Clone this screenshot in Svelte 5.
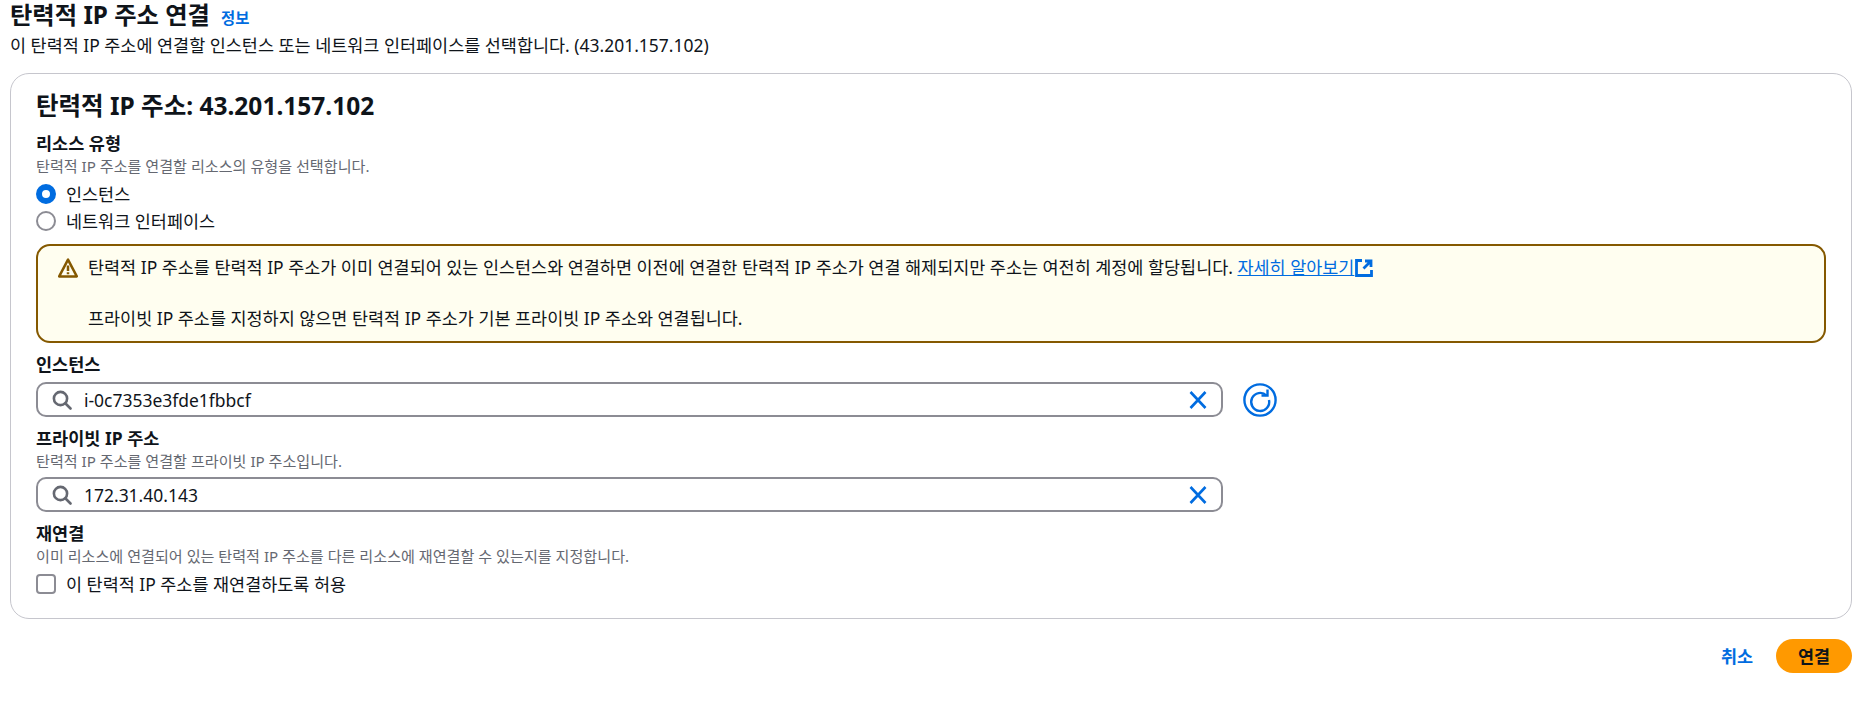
<script lang="ts">
  let instance = $state('i-0c7353e3fde1fbbcf');
  let privateIp = $state('172.31.40.143');
  let resourceType = $state('instance');
  let allowReassoc = $state(false);
</script>

{#snippet searchIcon()}
  <svg class="search-icon" viewBox="0 0 20 20" aria-hidden="true">
    <circle cx="8.5" cy="8.5" r="6.6" />
    <path d="M13.5 13.5l5 5" />
  </svg>
{/snippet}

{#snippet clearIcon()}
  <svg class="clear-icon" viewBox="0 0 20 20" aria-hidden="true">
    <path d="M2.5 2l15 16M17.5 2l-15 16" />
  </svg>
{/snippet}

<div class="page">
  <header class="page-head">
    <h1>탄력적 IP 주소 연결<a class="info" href="#info">정보</a></h1>
    <p>이 탄력적 IP 주소에 연결할 인스턴스 또는 네트워크 인터페이스를 선택합니다. (43.201.157.102)</p>
  </header>

  <section class="card">
    <h2>탄력적 IP 주소: 43.201.157.102</h2>

    <div class="label">리소스 유형</div>
    <div class="desc">탄력적 IP 주소를 연결할 리소스의 유형을 선택합니다.</div>
    <div class="radios">
      <button class="radio" class:checked={resourceType === 'instance'} onclick={() => (resourceType = 'instance')}>
        <span class="dot"></span>인스턴스
      </button>
      <button class="radio" class:checked={resourceType === 'eni'} onclick={() => (resourceType = 'eni')}>
        <span class="dot"></span>네트워크 인터페이스
      </button>
    </div>

    <div class="alert">
      <svg class="warn-icon" viewBox="0 0 20 20" aria-hidden="true">
        <path d="M10 1.6L1.2 18.4h17.6z" />
        <path d="M10 7.5v5.4M10 14.2v2" />
      </svg>
      <div class="alert-text">
        탄력적 IP 주소를 탄력적 IP 주소가 이미 연결되어 있는 인스턴스와 연결하면 이전에 연결한 탄력적 IP 주소가 연결 해제되지만 주소는 여전히 계정에 할당됩니다.
        <a href="#learn">자세히 알아보기<svg class="ext" viewBox="0 0 18 18" aria-hidden="true"><path d="M7 1.5H1.5v15h15V11" /><path d="M10 2h6v6M16 2L8.5 9.5" /></svg></a>
        <br /><br />
        프라이빗 IP 주소를 지정하지 않으면 탄력적 IP 주소가 기본 프라이빗 IP 주소와 연결됩니다.
      </div>
    </div>

    <div class="label instance-label">인스턴스</div>
    <div class="input-row">
      <div class="input">
        {@render searchIcon()}
        <input bind:value={instance} />
        {@render clearIcon()}
      </div>
      <button class="refresh" aria-label="새로 고침">
        <svg viewBox="0 0 34 34">
          <circle cx="17" cy="17" r="15.6" />
          <path d="M23.5 12.5A9 9 0 1 0 26 17" />
          <path d="M18.5 12.5h6v-6" />
        </svg>
      </button>
    </div>

    <div class="label ip-label">프라이빗 IP 주소</div>
    <div class="desc">탄력적 IP 주소를 연결할 프라이빗 IP 주소입니다.</div>
    <div class="input-row ip-input">
      <div class="input">
        {@render searchIcon()}
        <input bind:value={privateIp} />
        {@render clearIcon()}
      </div>
    </div>

    <div class="label re-label">재연결</div>
    <div class="desc">이미 리소스에 연결되어 있는 탄력적 IP 주소를 다른 리소스에 재연결할 수 있는지를 지정합니다.</div>
    <label class="check">
      <input type="checkbox" bind:checked={allowReassoc} />
      <span>이 탄력적 IP 주소를 재연결하도록 허용</span>
    </label>
  </section>

  <footer class="actions">
    <a class="cancel" href="#cancel">취소</a>
    <button class="primary">연결</button>
  </footer>
</div>

<style>
  :global(body) {
    background: #fff;
  }

  .page {
    font-family: 'Noto Sans', 'Noto Sans CJK KR', sans-serif;
    font-size: 17.47px;
    line-height: 24px;
    color: #0f141a;
    padding: 0 19px 0 10px;
  }

  h1 {
    margin: 0;
    height: 30px;
    font-size: 24.3px;
    line-height: 30px;
    font-weight: 700;
  }

  .info {
    margin-left: 11px;
    font-size: 15.4px;
    font-weight: 700;
    color: #006ce0;
    text-decoration: none;
  }

  .page-head p {
    margin: 3px 0 0;
    height: 24px;
  }

  .card {
    margin-top: 16px;
    height: 546px;
    box-sizing: border-box;
    border: 1px solid #c6c6cd;
    border-radius: 19px;
    padding: 16px 25px 0;
  }

  h2 {
    margin: 0;
    font-size: 24.5px;
    line-height: 32px;
    font-weight: 700;
  }

  .label {
    margin-top: 9px;
    height: 24px;
    font-size: 17.5px;
    font-weight: 700;
    line-height: 24px;
  }

  .desc {
    height: 22px;
    font-size: 15.1px;
    line-height: 22px;
    color: #656871;
  }

  .radios {
    margin-top: 5px;
    display: flex;
    flex-direction: column;
    gap: 3px;
  }

  .radio {
    display: flex;
    align-items: center;
    gap: 10px;
    height: 24px;
    padding: 0;
    border: 0;
    background: none;
    font: inherit;
    color: inherit;
    cursor: pointer;
  }

  .dot {
    width: 20px;
    height: 20px;
    box-sizing: border-box;
    border: 2.4px solid #8c8c94;
    border-radius: 50%;
    background: #fff;
  }

  .radio.checked .dot {
    border: 6px solid #006ce0;
  }

  .alert {
    margin-top: 11px;
    display: flex;
    gap: 10px;
    box-sizing: border-box;
    height: 99px;
    padding: 9px 20px 0 20px;
    background: #fffef0;
    border: 2px solid #855900;
    border-radius: 14px;
    line-height: 25.5px;
  }

  .warn-icon {
    flex: none;
    width: 20px;
    height: 20px;
    margin-top: 3px;
    fill: none;
    stroke: #855900;
    stroke-width: 2.5;
    stroke-linejoin: round;
  }

  .alert-text a {
    color: #006ce0;
    text-decoration: underline;
  }

  .ext {
    width: 18px;
    height: 18px;
    margin-left: 1px;
    vertical-align: -3px;
    fill: none;
    stroke: #006ce0;
    stroke-width: 2.8;
  }

  .instance-label {
    margin-top: 9px;
  }

  .input-row {
    display: flex;
    align-items: center;
    gap: 20px;
    margin-top: 6px;
  }

  .input {
    flex: none;
    width: 1187px;
    height: 35px;
    box-sizing: border-box;
    display: flex;
    align-items: center;
    padding: 0 13px 0 14px;
    border: 2.4px solid #8c8c94;
    border-radius: 10px;
    background: #fff;
  }

  .input input {
    flex: 1;
    min-width: 0;
    margin-left: 12px;
    padding: 0;
    border: 0;
    outline: 0;
    background: none;
    font: inherit;
    color: inherit;
  }

  .search-icon {
    flex: none;
    width: 20px;
    height: 20px;
    fill: none;
    stroke: #656871;
    stroke-width: 2.6;
    stroke-linecap: round;
  }

  .clear-icon {
    flex: none;
    width: 20px;
    height: 20px;
    fill: none;
    stroke: #006ce0;
    stroke-width: 2.6;
  }

  .refresh {
    width: 34px;
    height: 34px;
    padding: 0;
    border: 0;
    background: none;
    cursor: pointer;
  }

  .refresh svg {
    display: block;
    width: 34px;
    height: 34px;
    fill: none;
    stroke: #006ce0;
    stroke-width: 2.4;
  }

  .ip-label {
    margin-top: 9px;
  }

  .ip-input {
    margin-top: 5px;
  }

  .re-label {
    margin-top: 9px;
  }

  .check {
    margin-top: 5px;
    display: flex;
    align-items: center;
    gap: 10px;
    height: 24px;
  }

  .check input {
    appearance: none;
    flex: none;
    width: 20px;
    height: 20px;
    margin: 0;
    border: 2.4px solid #8c8c94;
    border-radius: 4px;
    background: #fff;
  }

  .actions {
    margin-top: 20px;
    display: flex;
    justify-content: flex-end;
    align-items: center;
    gap: 23px;
  }

  .cancel {
    color: #006ce0;
    font-weight: 700;
    text-decoration: none;
  }

  .primary {
    width: 76px;
    height: 34px;
    padding: 0;
    border: 0;
    border-radius: 20px;
    background: #ff9900;
    color: #0f141a;
    font: inherit;
    font-weight: 700;
    cursor: pointer;
  }
</style>
